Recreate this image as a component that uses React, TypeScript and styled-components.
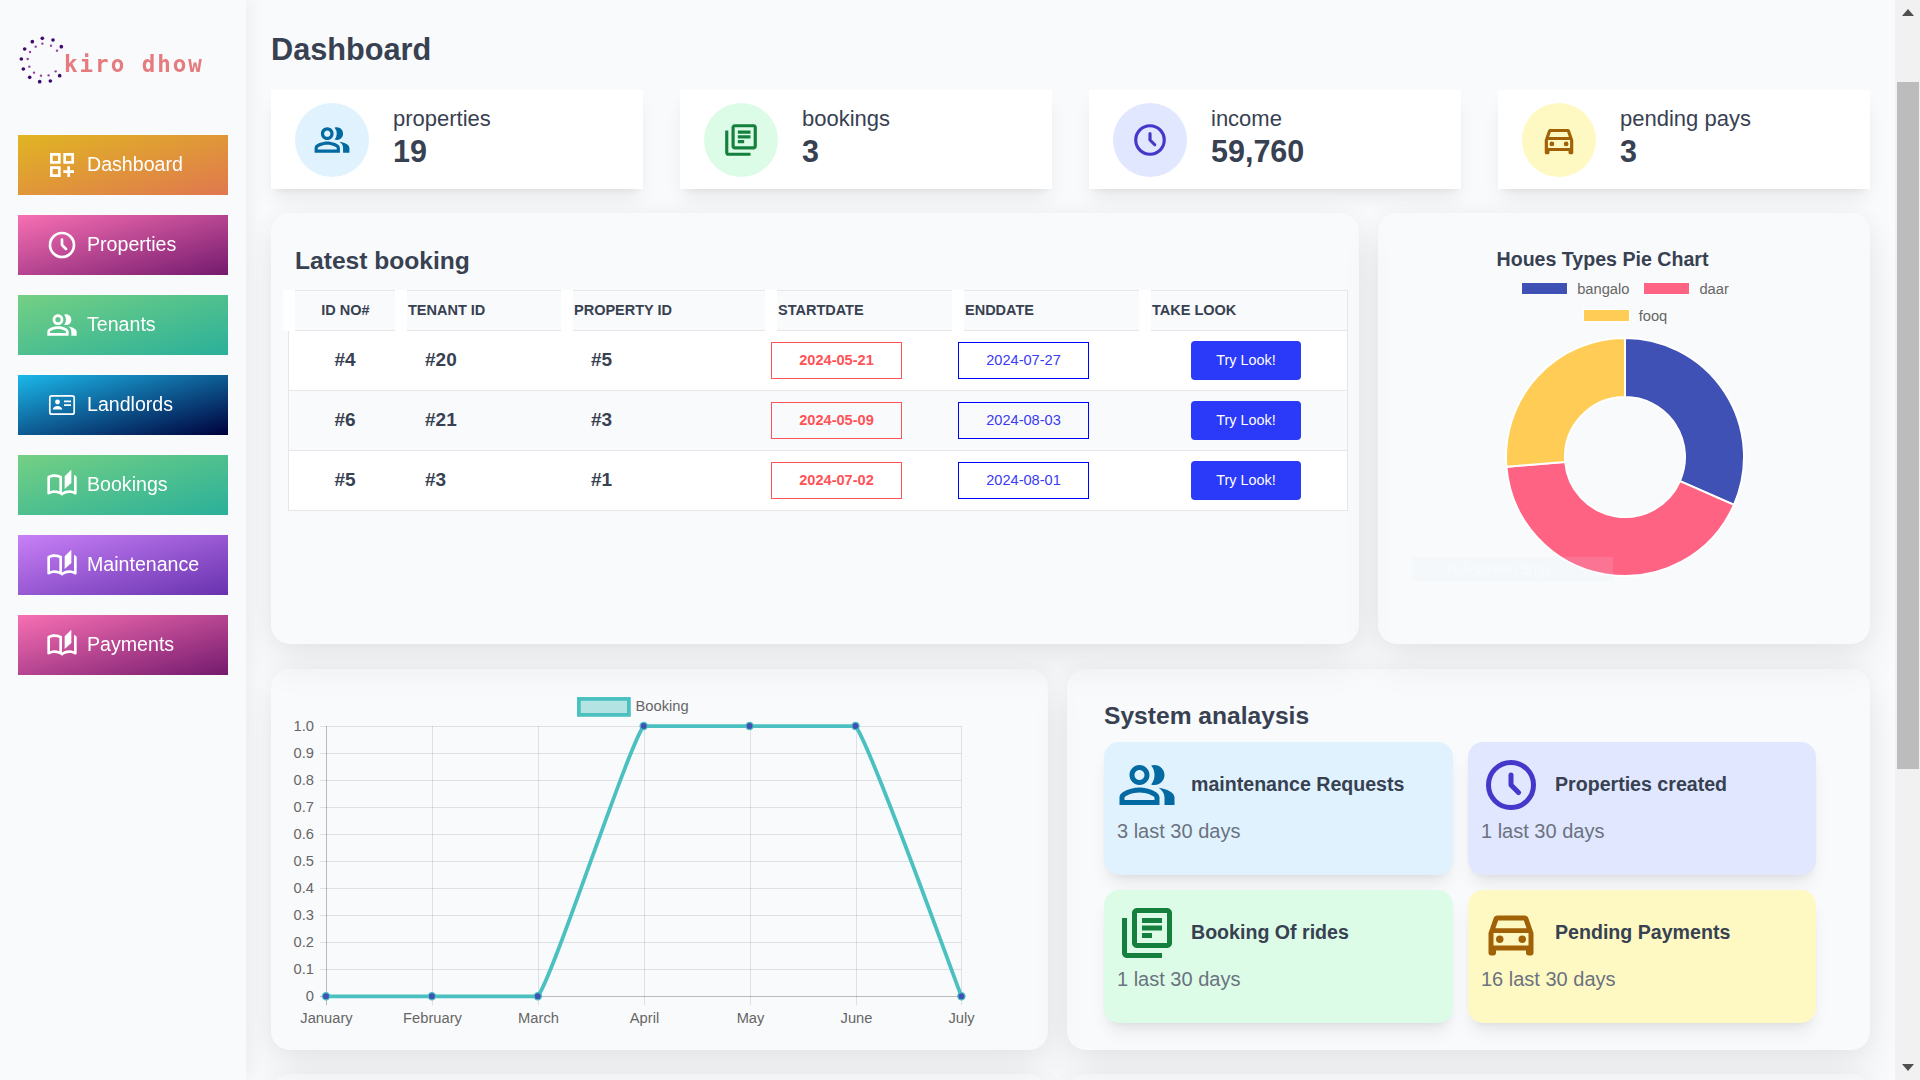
import React, { useLayoutEffect, useRef } from 'react';
import styled, { createGlobalStyle } from 'styled-components';
import { HiOutlineClock } from 'react-icons/hi';
import {
  MdOutlineAutoStories,
  MdOutlineDashboardCustomize,
  MdOutlineDirectionsCar,
  MdOutlineLibraryBooks,
  MdOutlinePeopleAlt,
} from 'react-icons/md';

const GlobalStyle = createGlobalStyle`
  * { box-sizing: border-box; }
  html, body { margin: 0; height: 100%; overflow: hidden; }
  body { font-family: "Liberation Sans", Arial, sans-serif; color: #374151; background: #f9fafb; }
`;

const Shell = styled.div`
  display: flex;
  height: 100vh;
`;

const Sidebar = styled.aside`
  flex: 0 0 246px;
  padding: 0 18px;
  background: #f9fafb;
  box-shadow: 5px 0 16px rgba(0, 0, 0, 0.05);
  position: relative;
  z-index: 2;
`;

const Logo = styled.div`
  display: flex;
  align-items: center;
  height: 135px;
  padding-bottom: 15px;
`;

const LogoMark = styled.svg`
  flex: none;
  width: 46px;
  height: 50px;
`;

const LogoText = styled.span`
  font-family: "DejaVu Sans Mono", "Liberation Mono", monospace;
  font-size: 22.5px;
  font-weight: 700;
  letter-spacing: 2px;
  color: #e57b7e;
  margin-top: 8px;
  white-space: nowrap;
`;

const Nav = styled.nav`
  display: flex;
  flex-direction: column;
  gap: 20px;
`;

const NavItem = styled.a<{ $from: string; $to: string }>`
  display: flex;
  align-items: center;
  gap: 9px;
  height: 60px;
  width: 210px;
  padding: 0 0 1px 28px;
  font-size: 19.6px;
  color: #fff;
  background: linear-gradient(to bottom right, ${({ $from }) => $from}, ${({ $to }) => $to});
  svg { flex: none; }
`;

const Main = styled.main`
  flex: 1;
  height: 100vh;
  overflow-y: auto;
  scrollbar-width: none;
  padding: 0 25px;
  background: #f9fafb;
`;

// the browser's scrollbar as it stands in the picture
const ScrollRail = styled.div`
  flex: 0 0 25px;
  display: flex;
  flex-direction: column;
  height: 100vh;
  background: #f1f1f1;
  position: relative;
  z-index: 2;
`;

const ScrollArrow = styled.svg`
  display: block;
  flex: none;
  width: 25px;
  height: 25px;
  fill: #505050;
`;

const ScrollThumb = styled.div`
  flex: none;
  height: 687px;
  margin: 57px 1px 0 2px;
  background: #bcbcbc;
`;

const ScrollRest = styled.div`
  flex: 1;
`;

// sits above the fold, the page opens scrolled past it
const TopBar = styled.div`
  height: 90px;
`;

const PageTitle = styled.h1`
  margin: 0;
  padding: 32px 0 22px;
  font-size: 30.7px;
  line-height: 36px;
  font-weight: 700;
`;

const StatRow = styled.section`
  display: grid;
  grid-template-columns: repeat(4, 372px);
  column-gap: 37px;
  height: 99px;
`;

const StatCard = styled.div`
  display: flex;
  align-items: center;
  gap: 23px;
  padding-left: 24px;
  background: #fff;
  box-shadow: 0 12px 19px -4px rgba(0, 0, 0, 0.08), 0 5px 7px -5px rgba(0, 0, 0, 0.08);
`;

const IconCircle = styled.div<{ $bg: string; $fg: string }>`
  flex: none;
  display: flex;
  align-items: center;
  justify-content: center;
  width: 74px;
  height: 74px;
  border-radius: 50%;
  background: ${({ $bg }) => $bg};
  color: ${({ $fg }) => $fg};
`;

const StatText = styled.div`
  margin: 0 0 5px 1px;
`;

const StatLabel = styled.div`
  font-size: 22px;
  line-height: 28px;
`;

const StatValue = styled.div`
  font-size: 30.5px;
  line-height: 36px;
  font-weight: 700;
`;

const Row = styled.section<{ $cols: string; $top: number }>`
  display: grid;
  grid-template-columns: ${({ $cols }) => $cols};
  column-gap: 19px;
  margin-top: ${({ $top }) => $top}px;
`;

const Card = styled.div<{ $height: number }>`
  position: relative;
  height: ${({ $height }) => $height}px;
  border-radius: 19px;
  box-shadow: 0 20px 40px rgba(0, 0, 0, 0.07), 0 0 25px rgba(0, 0, 0, 0.035);
`;

const CardTitle = styled.h2`
  margin: 0;
  font-size: 24.6px;
  line-height: 32px;
  font-weight: 700;
`;

const BookingCard = styled(Card)`
  padding: 32px 12px 0 24px;
`;

const BookingTable = styled.div`
  width: 1060px;
  margin: 13px 0 0 -7px;
`;

const HeadRow = styled.div`
  display: grid;
  grid-template-columns: 112px 166px 204px 187px 187px 209px;
  height: 41px;
  margin-left: -5px;
  background: #fff;
`;

const HeadCell = styled.div<{ $center?: boolean; $last?: boolean }>`
  display: flex;
  align-items: center;
  justify-content: ${({ $center }) => ($center ? 'center' : 'flex-start')};
  margin-left: 12px;
  padding: 0 0 2px 1px;
  font-size: 14.5px;
  font-weight: 700;
  background: #f9fafb;
  border-top: 1px solid #e5e7eb;
  border-bottom: 1px solid #e5e7eb;
  border-right: ${({ $last }) => ($last ? '1px solid #e5e7eb' : '0')};
`;

const BodyRow = styled.div<{ $alt: boolean }>`
  display: grid;
  grid-template-columns: 107px 166px 204px 187px 187px 209px;
  align-items: center;
  height: 60px;
  background: ${({ $alt }) => ($alt ? '#f9fafb' : '#fff')};
  border: 1px solid #e5e7eb;
  border-top: 0;
`;

const IdCell = styled.div<{ $pad: number; $center?: boolean }>`
  padding: 0 0 1px ${({ $pad }) => $pad}px;
  text-align: ${({ $center }) => ($center ? 'center' : 'left')};
  font-size: 19px;
  font-weight: 700;
`;

const DateCell = styled.div`
  padding-left: 5px;
`;

const DateBox = styled.div<{ $tone: 'start' | 'end' }>`
  display: flex;
  align-items: center;
  justify-content: center;
  width: 131px;
  height: 37px;
  padding-bottom: 2px;
  font-size: 14.6px;
  font-weight: ${({ $tone }) => ($tone === 'start' ? 700 : 400)};
  color: ${({ $tone }) => ($tone === 'start' ? '#ff5257' : '#3a3af2')};
  border: 1.5px solid ${({ $tone }) => ($tone === 'start' ? '#ff5257' : '#0000ff')};
`;

const ActionCell = styled.div`
  padding-left: 51px;
`;

const TryButton = styled.button`
  display: block;
  width: 110px;
  height: 39px;
  padding: 0 0 2px;
  border: 0;
  border-radius: 4px;
  font-family: inherit;
  font-size: 14.4px;
  color: #fff;
  background: #2a3af8;
`;

const PieCard = styled(Card)`
  display: flex;
  flex-direction: column;
  align-items: center;
  padding: 34px 0 0 2px;
`;

const PieTitle = styled.div`
  font-size: 19.6px;
  line-height: 24px;
  font-weight: 700;
  padding-right: 45px;
`;

const PieLegend = styled.div`
  display: flex;
  flex-wrap: wrap;
  justify-content: center;
  gap: 14px;
  width: 250px;
  margin-top: 11px;
`;

const LegendItem = styled.div`
  display: flex;
  align-items: center;
  gap: 9px;
  height: 13px;
  font-size: 14.7px;
  color: #666;
`;

const Swatch = styled.span<{ $color: string }>`
  width: 47px;
  height: 13px;
  background: ${({ $color }) => $color};
  border: 1px solid #fff;
`;

const Donut = styled.svg`
  display: block;
  width: 240px;
  height: 240px;
  margin-top: 15px;
`;

// snipping tool hint caught in the screenshot
const SnipHint = styled.div`
  position: absolute;
  left: 34px;
  top: 344px;
  width: 201px;
  height: 24px;
  padding-left: 34px;
  font-family: "Noto Sans", sans-serif;
  font-size: 14px;
  line-height: 24px;
  color: rgba(255, 255, 255, 0.45);
  background: rgba(225, 240, 255, 0.12);
`;

const ChartSvg = styled.svg`
  display: block;
  width: 777px;
  height: 381px;
  font-family: "Liberation Sans", Arial, sans-serif;
  font-size: 14.7px;
`;

const AnalysisCard = styled(Card)`
  padding: 31px 0 0 37px;
`;

const AnalysisGrid = styled.div`
  display: grid;
  grid-template-columns: 349px 348px;
  grid-auto-rows: 133px;
  gap: 15px;
  margin-top: 10px;
`;

const Tile = styled.div<{ $bg: string }>`
  padding: 15px 13px 0;
  border-radius: 15px;
  background: ${({ $bg }) => $bg};
  box-shadow: 0 12px 18px -4px rgba(0, 0, 0, 0.08), 0 5px 8px -5px rgba(0, 0, 0, 0.08);
`;

const TileHead = styled.div`
  display: flex;
  align-items: center;
  height: 56px;
`;

const TileIcon = styled.div<{ $fg: string }>`
  flex: none;
  display: flex;
  align-items: center;
  justify-content: center;
  width: 60px;
  margin-right: 14px;
  color: ${({ $fg }) => $fg};
`;

const TileTitle = styled.div`
  margin-bottom: 2px;
  font-size: 19.6px;
  font-weight: 700;
`;

const TileNote = styled.div`
  margin-top: 6px;
  font-size: 20px;
  line-height: 24px;
  color: #6b7280;
`;

const IdCardIcon = () => (
  <svg width="32" height="32" viewBox="0 0 32 32" fill="currentColor">
    <rect x="3.8" y="6.8" width="24.4" height="18.4" rx="2" fill="none" stroke="currentColor" strokeWidth="1.7" />
    <circle cx="11.5" cy="13" r="2.4" />
    <path d="M6.7 20.6c.4-2.6 2.3-3.7 4.8-3.7s4.4 1.1 4.8 3.7z" />
    <path d="M18 11.5h7v1.8h-7zM18 15.2h7V17h-7z" />
  </svg>
);

const navItems = [
  { label: 'Dashboard', from: '#e0b522', to: '#e0784f', icon: <MdOutlineDashboardCustomize size={32} /> },
  { label: 'Properties', from: '#f870b3', to: '#741a6e', icon: <HiOutlineClock size={32} /> },
  { label: 'Tenants', from: '#74d083', to: '#2ab09a', icon: <MdOutlinePeopleAlt size={32} /> },
  { label: 'Landlords', from: '#1bb8ea', to: '#00003c', icon: <IdCardIcon /> },
  { label: 'Bookings', from: '#74d083', to: '#2ab09a', icon: <MdOutlineAutoStories size={32} /> },
  { label: 'Maintenance', from: '#c880f7', to: '#6832ae', icon: <MdOutlineAutoStories size={32} /> },
  { label: 'Payments', from: '#f870b3', to: '#741a6e', icon: <MdOutlineAutoStories size={32} /> },
];

const tones = {
  sky: { bg: '#e0f2fe', fg: '#0369a1' },
  green: { bg: '#dcfce7', fg: '#15803d' },
  indigo: { bg: '#e0e7ff', fg: '#4338ca' },
  yellow: { bg: '#fef9c3', fg: '#a16207' },
};

const stats = [
  { label: 'properties', value: '19', tone: tones.sky, Icon: MdOutlinePeopleAlt },
  { label: 'bookings', value: '3', tone: tones.green, Icon: MdOutlineLibraryBooks },
  { label: 'income', value: '59,760', tone: tones.indigo, Icon: HiOutlineClock },
  { label: 'pending pays', value: '3', tone: tones.yellow, Icon: MdOutlineDirectionsCar },
];

const bookings = [
  { id: '#4', tenant: '#20', property: '#5', start: '2024-05-21', end: '2024-07-27' },
  { id: '#6', tenant: '#21', property: '#3', start: '2024-05-09', end: '2024-08-03' },
  { id: '#5', tenant: '#3', property: '#1', start: '2024-07-02', end: '2024-08-01' },
];

const tiles = [
  { title: 'maintenance Requests', note: '3 last 30 days', tone: tones.sky, Icon: MdOutlinePeopleAlt },
  { title: 'Properties created', note: '1 last 30 days', tone: tones.indigo, Icon: HiOutlineClock },
  { title: 'Booking Of rides', note: '1 last 30 days', tone: tones.green, Icon: MdOutlineLibraryBooks },
  { title: 'Pending Payments', note: '16 last 30 days', tone: tones.yellow, Icon: MdOutlineDirectionsCar },
];

const logoOuter = [
  [125, 115], [157, 120], [182, 140], [95, 125], [72, 147], [62, 177], [68, 207], [87, 232], [117, 245], [149, 243], [177, 227],
];
const logoInner = [
  [125, 131], [151, 137], [169, 152], [105, 140], [88, 156], [81, 177], [86, 200], [100, 218], [121, 227], [144, 226], [165, 214],
];

const slices = [
  { label: 'bangalo', value: 6, color: '#3f51b5' },
  { label: 'daar', value: 8, color: '#ff6384' },
  { label: 'fooq', value: 5, color: '#ffcd56' },
];

const polar = (r: number, deg: number) => {
  const a = ((deg - 90) * Math.PI) / 180;
  return `${(120 + r * Math.cos(a)).toFixed(2)} ${(120 + r * Math.sin(a)).toFixed(2)}`;
};

const slicePath = (from: number, to: number) => {
  const large = to - from > 180 ? 1 : 0;
  return `M${polar(119, from)}A119 119 0 ${large} 1 ${polar(119, to)}L${polar(60, to)}A60 60 0 ${large} 0 ${polar(60, from)}Z`;
};

const months = ['January', 'February', 'March', 'April', 'May', 'June', 'July'];
const bookingCounts = [0, 0, 0, 1, 1, 1, 0];
const chartLeft = 55;
const chartStep = 105.9;
const chartTop = 57;
const chartBottom = 327.3;
const chartPoints = bookingCounts.map((v, i) => ({
  x: chartLeft + i * chartStep,
  y: chartBottom - v * (chartBottom - chartTop),
}));

const clampY = (y: number) => Math.min(chartBottom, Math.max(chartTop, y));

// spline with tension 0.1, kept inside the chart area so the flat runs stay flat
const linePath = () => {
  const t = 0.1;
  const ctrl = chartPoints.map((p, i) => {
    const prev = chartPoints[i - 1] || p;
    const next = chartPoints[i + 1] || p;
    const d1 = Math.hypot(p.x - prev.x, p.y - prev.y);
    const d2 = Math.hypot(next.x - p.x, next.y - p.y);
    const s1 = d1 + d2 ? (t * d1) / (d1 + d2) : 0;
    const s2 = d1 + d2 ? (t * d2) / (d1 + d2) : 0;
    return {
      inX: p.x - s1 * (next.x - prev.x),
      inY: clampY(p.y - s1 * (next.y - prev.y)),
      outX: p.x + s2 * (next.x - prev.x),
      outY: clampY(p.y + s2 * (next.y - prev.y)),
    };
  });
  return chartPoints.reduce((d, p, i) => {
    if (i === 0) return `M${p.x} ${p.y}`;
    return `${d}C${ctrl[i - 1].outX} ${ctrl[i - 1].outY} ${ctrl[i].inX} ${ctrl[i].inY} ${p.x} ${p.y}`;
  }, '');
};

const LineChart = () => (
  <ChartSvg viewBox="0 0 777 381">
    <rect x="307.9" y="29.9" width="50" height="16" fill="rgba(75,192,192,0.4)" stroke="#4bc0c0" strokeWidth="3.75" />
    <text x="364.5" y="42" fill="#666">Booking</text>
    {Array.from({ length: 11 }, (_, i) => {
      const y = Math.round(chartTop + (i * (chartBottom - chartTop)) / 10) + 0.5;
      const label = i === 10 ? '0' : (1 - i / 10).toFixed(1);
      return (
        <g key={label}>
          <line x1={chartLeft - 6} x2={chartLeft + 6 * chartStep} y1={y} y2={y} stroke={i === 10 ? 'rgba(0,0,0,0.25)' : 'rgba(0,0,0,0.1)'} />
          <text x={chartLeft - 12} y={y + 4} textAnchor="end" fill="#666">{label}</text>
        </g>
      );
    })}
    {months.map((m, i) => {
      const x = Math.round(chartLeft + i * chartStep) + 0.5;
      return (
        <g key={m}>
          <line x1={x} x2={x} y1={chartTop} y2={chartBottom + 9} stroke={i === 0 ? 'rgba(0,0,0,0.25)' : 'rgba(0,0,0,0.1)'} />
          <text x={x} y={354} textAnchor="middle" fill="#666">{m}</text>
        </g>
      );
    })}
    <path d={linePath()} fill="none" stroke="#4bc0c0" strokeWidth="3.75" />
    {chartPoints.map((p) => (
      <circle key={p.x} cx={p.x} cy={p.y} r="3.6" fill="#3f51b5" stroke="#4bc0c0" strokeWidth="1.25" />
    ))}
  </ChartSvg>
);

const PieChart = () => {
  const total = slices.reduce((sum, s) => sum + s.value, 0);
  let angle = 0;
  return (
    <Donut viewBox="0 0 240 240">
      {slices.map((s) => {
        const from = angle;
        angle += (s.value / total) * 360;
        return <path key={s.label} d={slicePath(from, angle)} fill={s.color} stroke="#fff" strokeWidth="2" />;
      })}
    </Donut>
  );
};

const App = () => {
  const mainRef = useRef<HTMLElement>(null);

  useLayoutEffect(() => {
    if (mainRef.current) mainRef.current.scrollTop = 90;
  }, []);

  return (
    <Shell>
      <GlobalStyle />
      <Sidebar>
        <Logo>
          <LogoMark viewBox="52 105 138 150">
            {logoOuter.map(([cx, cy]) => (
              <circle key={`${cx}-${cy}`} cx={cx} cy={cy} r="5.5" fill="#3f0a6e" />
            ))}
            {logoInner.map(([cx, cy]) => (
              <circle key={`${cx}-${cy}`} cx={cx} cy={cy} r="3.6" fill="#9a3fa3" />
            ))}
          </LogoMark>
          <LogoText>kiro dhow</LogoText>
        </Logo>
        <Nav>
          {navItems.map((item) => (
            <NavItem key={item.label} $from={item.from} $to={item.to}>
              {item.icon}
              {item.label}
            </NavItem>
          ))}
        </Nav>
      </Sidebar>
      <Main ref={mainRef}>
        <TopBar />
        <PageTitle>Dashboard</PageTitle>
        <StatRow>
          {stats.map(({ label, value, tone, Icon }) => (
            <StatCard key={label}>
              <IconCircle $bg={tone.bg} $fg={tone.fg}>
                <Icon size={38} />
              </IconCircle>
              <StatText>
                <StatLabel>{label}</StatLabel>
                <StatValue>{value}</StatValue>
              </StatText>
            </StatCard>
          ))}
        </StatRow>
        <Row $cols="1088px 492px" $top={24}>
          <BookingCard $height={431}>
            <CardTitle>Latest booking</CardTitle>
            <BookingTable>
              <HeadRow>
                <HeadCell $center>ID NO#</HeadCell>
                <HeadCell>TENANT ID</HeadCell>
                <HeadCell>PROPERTY ID</HeadCell>
                <HeadCell>STARTDATE</HeadCell>
                <HeadCell>ENDDATE</HeadCell>
                <HeadCell $last>TAKE LOOK</HeadCell>
              </HeadRow>
              {bookings.map((b, i) => (
                <BodyRow key={b.start} $alt={i % 2 === 1}>
                  <IdCell $pad={5} $center>{b.id}</IdCell>
                  <IdCell $pad={29}>{b.tenant}</IdCell>
                  <IdCell $pad={29}>{b.property}</IdCell>
                  <DateCell><DateBox $tone="start">{b.start}</DateBox></DateCell>
                  <DateCell><DateBox $tone="end">{b.end}</DateBox></DateCell>
                  <ActionCell><TryButton>Try Look!</TryButton></ActionCell>
                </BodyRow>
              ))}
            </BookingTable>
          </BookingCard>
          <PieCard $height={431}>
            <PieTitle>Houes Types Pie Chart</PieTitle>
            <PieLegend>
              {slices.map((s) => (
                <LegendItem key={s.label}>
                  <Swatch $color={s.color} />
                  {s.label}
                </LegendItem>
              ))}
            </PieLegend>
            <PieChart />
            <SnipHint>Full-screen Snip</SnipHint>
          </PieCard>
        </Row>
        <Row $cols="777px 803px" $top={25}>
          <Card $height={381}>
            <LineChart />
          </Card>
          <AnalysisCard $height={381}>
            <CardTitle>System analaysis</CardTitle>
            <AnalysisGrid>
              {tiles.map(({ title, note, tone, Icon }) => (
                <Tile key={title} $bg={tone.bg}>
                  <TileHead>
                    <TileIcon $fg={tone.fg}>
                      <Icon size={60} />
                    </TileIcon>
                    <TileTitle>{title}</TileTitle>
                  </TileHead>
                  <TileNote>{note}</TileNote>
                </Tile>
              ))}
            </AnalysisGrid>
          </AnalysisCard>
        </Row>
        <Row $cols="777px 803px" $top={24}>
          <Card $height={430} />
          <Card $height={430} />
        </Row>
      </Main>
      <ScrollRail>
        <ScrollArrow viewBox="0 0 25 25"><path d="M13 9l6 7H7z" /></ScrollArrow>
        <ScrollThumb />
        <ScrollRest />
        <ScrollArrow viewBox="0 0 25 25"><path d="M7 9h12l-6 7z" /></ScrollArrow>
      </ScrollRail>
    </Shell>
  );
};

export default App;
